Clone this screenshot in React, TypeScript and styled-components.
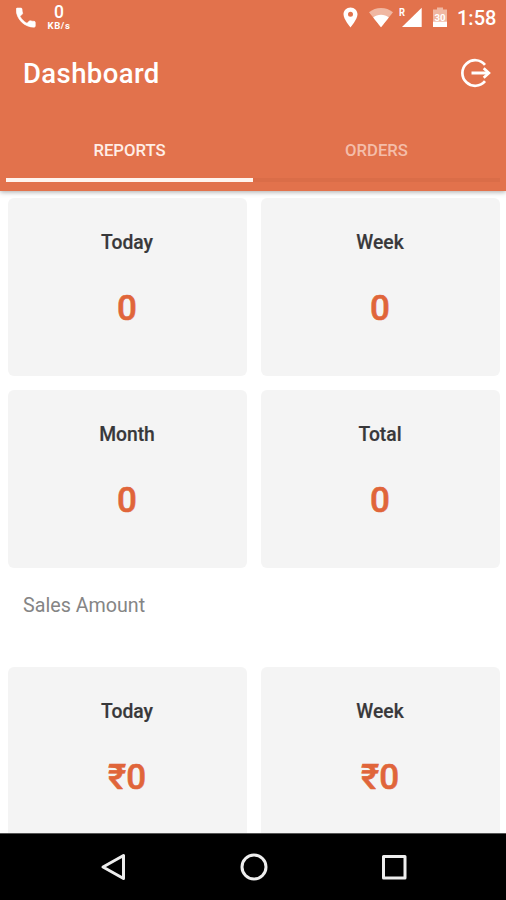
import React from "react";
import styled, { createGlobalStyle } from "styled-components";

const GlobalStyle = createGlobalStyle`
  * { box-sizing: border-box; }
  body { margin: 0; background: #fff; font-family: Roboto, "Noto Sans", sans-serif; }
`;

const Screen = styled.div`
  width: 506px;
  height: 900px;
  display: flex;
  flex-direction: column;
  overflow: hidden;
  background: #fff;
`;

const Header = styled.header`
  flex: none;
  height: 191px;
  display: flex;
  flex-direction: column;
  background: #e2724c;
  color: #fff;
  box-shadow: 0 1px 5px rgba(0, 0, 0, 0.35);
  z-index: 1;
`;

const StatusBar = styled.div`
  height: 36px;
  display: flex;
  justify-content: space-between;
`;

const StatusGroup = styled.div`
  display: flex;
  align-items: flex-start;
`;

const StatusIcon = styled.svg<{ $left: number }>`
  display: block;
  height: 36px;
  margin-left: ${(p) => p.$left}px;
`;

const NetSpeed = styled.div`
  width: 26px;
  margin: 3px 0 0 10px;
  display: flex;
  flex-direction: column;
  align-items: center;
  font-weight: 700;
`;

const SpeedValue = styled.span`
  font-size: 17.5px;
  line-height: 19px;
  font-weight: 500;
`;

const SpeedUnit = styled.span`
  font-size: 9.5px;
  line-height: 7px;
  letter-spacing: 0.6px;
`;

const Clock = styled.span`
  width: 39px;
  margin: 6px 10px 0 9px;
  font-size: 20px;
  line-height: 24px;
  font-weight: 500;
  white-space: nowrap;
`;

const AppBar = styled.div`
  height: 74px;
  padding: 0 14px 0 23px;
  display: flex;
  align-items: center;
  justify-content: space-between;
`;

const Title = styled.h1`
  margin: 0;
  padding-top: 1px;
  font-size: 27.5px;
  line-height: 32px;
  font-weight: 500;
  letter-spacing: 0.4px;
`;

const IconButton = styled.button`
  display: block;
  border: 0;
  padding: 0;
  background: none;
  color: inherit;
`;

const Tabs = styled.nav`
  height: 72px;
  padding: 0 6px;
  display: flex;
`;

const Tab = styled.button<{ $active?: boolean }>`
  flex: 1;
  height: 72px;
  border: 0;
  border-bottom: 4px solid ${(p) => (p.$active ? "#fff4ee" : "#da6d48")};
  padding: 14px 0 0;
  background: none;
  color: ${(p) => (p.$active ? "#ffeee6" : "#f4bda9")};
  font: 500 16.7px/20px Roboto, sans-serif;
`;

const Content = styled.main`
  flex: 1;
  min-height: 0;
  overflow: hidden;
  padding: 7px 6px 0 8px;
`;

const CardGrid = styled.section`
  display: grid;
  grid-template-columns: 239px 239px;
  grid-auto-rows: 178px;
  gap: 14px;
`;

const Card = styled.article`
  border-radius: 6px;
  background: #f4f4f4;
  display: flex;
  flex-direction: column;
  align-items: center;
  padding: 32px 1px 0 0;
`;

const CardLabel = styled.h2`
  margin: 0;
  font-size: 19.3px;
  line-height: 26px;
  font-weight: 500;
  color: #38383a;
  -webkit-text-stroke: 0.2px #38383a;
`;

const CardValue = styled.div`
  margin-top: 32px;
  font-size: 35px;
  line-height: 42px;
  font-weight: 500;
  color: #e0653a;
  -webkit-text-stroke: 0.6px #e0653a;
`;

const SectionTitle = styled.h3`
  margin: 0;
  height: 99px;
  padding: 26px 0 0 15px;
  font-size: 19.7px;
  line-height: 24px;
  font-weight: 400;
  color: #858585;
`;

const NavBar = styled.footer`
  flex: none;
  height: 67px;
  padding-left: 1px;
  border-top: 1px solid #555;
  background: #000;
  display: flex;
  align-items: center;
  justify-content: center;
  gap: 110px;
`;

const NavIcon = styled.svg`
  display: block;
  width: 30px;
  height: 30px;
  fill: none;
  stroke: #eee;
  stroke-width: 3;
  stroke-linejoin: round;
`;

const BatteryText = styled.text`
  font: 700 9px Roboto, sans-serif;
  fill: #fff;
`;

const RoamText = styled.text`
  font: 700 10px Roboto, sans-serif;
  fill: #fff;
`;

type Stat = { label: string; value: string };

const orderStats: Stat[] = [
  { label: "Today", value: "0" },
  { label: "Week", value: "0" },
  { label: "Month", value: "0" },
  { label: "Total", value: "0" },
];

const salesStats: Stat[] = [
  { label: "Today", value: "₹0" },
  { label: "Week", value: "₹0" },
];

function Stats({ items }: { items: Stat[] }) {
  return (
    <CardGrid>
      {items.map((s) => (
        <Card key={s.label}>
          <CardLabel>{s.label}</CardLabel>
          <CardValue>{s.value}</CardValue>
        </Card>
      ))}
    </CardGrid>
  );
}

export default function App() {
  return (
    <>
      <GlobalStyle />
      <Screen>
        <Header>
          <StatusBar>
            <StatusGroup>
              <StatusIcon $left={16} width="20" viewBox="0 0 20 36">
                <path
                  transform="translate(-3 4.9) scale(1.06)"
                  fill="#fff"
                  stroke="#fff"
                  strokeWidth="0.6"
                  d="M6.62 10.79c1.44 2.83 3.76 5.14 6.59 6.59l2.2-2.2c.27-.27.67-.36 1.02-.24 1.12.37 2.33.57 3.57.57.55 0 1 .45 1 1V20c0 .55-.45 1-1 1-9.39 0-17-7.61-17-17 0-.55.45-1 1-1h3.5c.55 0 1 .45 1 1 0 1.25.2 2.45.57 3.57.11.35.03.74-.25 1.02l-2.2 2.2z"
                />
              </StatusIcon>
              <NetSpeed>
                <SpeedValue>0</SpeedValue>
                <SpeedUnit>KB/s</SpeedUnit>
              </NetSpeed>
            </StatusGroup>
            <StatusGroup>
              <StatusIcon $left={0} width="15" viewBox="0 0 15 36">
                <path
                  fill="#fff"
                  fillRule="evenodd"
                  d="M7.5 7.500C3.500 7.500.5 10.500.5 14.300c0 5 7 13.200 7 13.200s7-8.200 7-13.200c0-3.800-3-6.800-7-6.800zm0 9.300a2.500 2.500 0 1 1 0-5 2.500 2.500 0 0 1 0 5z"
                />
              </StatusIcon>
              <StatusIcon $left={11} width="24" viewBox="0 0 24 36">
                <path fill="#f0b7a2" d="M0 12.300C3.500 9.500 7.500 8 12 8s8.500 1.500 12 4.300L12 27.300z" />
                <path fill="#fff" d="M4.200 17.400C6.500 15.600 9 14.800 12 14.800s5.500.8 7.800 2.600L12 27.300z" />
              </StatusIcon>
              <StatusIcon $left={6} width="24" viewBox="0 0 24 36">
                <RoamText x="0" y="16" textLength="6" lengthAdjust="spacingAndGlyphs">R</RoamText>
                <path fill="#fff" d="M22.700 7.800V27H3z" />
              </StatusIcon>
              <StatusIcon $left={9} width="16" viewBox="0 0 16 36">
                <path fill="#f0b7a2" d="M1 9.500h4V7.500h6v2h4V22H1z" />
                <path fill="#fff" d="M1 21.700h14V27H1z" />
                <BatteryText x="2.500" y="20.800" textLength="11" lengthAdjust="spacingAndGlyphs">30</BatteryText>
              </StatusIcon>
              <Clock>1:58</Clock>
            </StatusGroup>
          </StatusBar>
          <AppBar>
            <Title>Dashboard</Title>
            <IconButton aria-label="Log out">
              <svg width="32" height="32" viewBox="0 0 32 32" fill="none" stroke="#fff" strokeWidth="2.700" display="block">
                <path d="M25 7.800A12.800 12.800 0 1 0 25 24.200" />
                <path d="M11.500 16h16" strokeWidth="3" />
                <path d="M23.700 11.200l5.200 4.800-5.200 4.800" />
              </svg>
            </IconButton>
          </AppBar>
          <Tabs>
            <Tab $active>REPORTS</Tab>
            <Tab>ORDERS</Tab>
          </Tabs>
        </Header>
        <Content>
          <Stats items={orderStats} />
          <SectionTitle>Sales Amount</SectionTitle>
          <Stats items={salesStats} />
        </Content>
        <NavBar>
          <NavIcon viewBox="0 0 30 30"><path d="M24.500 3.500v23L4 15z" /></NavIcon>
          <NavIcon viewBox="0 0 30 30"><circle cx="15" cy="15" r="12" /></NavIcon>
          <NavIcon viewBox="0 0 30 30"><rect x="4.500" y="4.500" width="21.500" height="21.500" /></NavIcon>
        </NavBar>
      </Screen>
    </>
  );
}
